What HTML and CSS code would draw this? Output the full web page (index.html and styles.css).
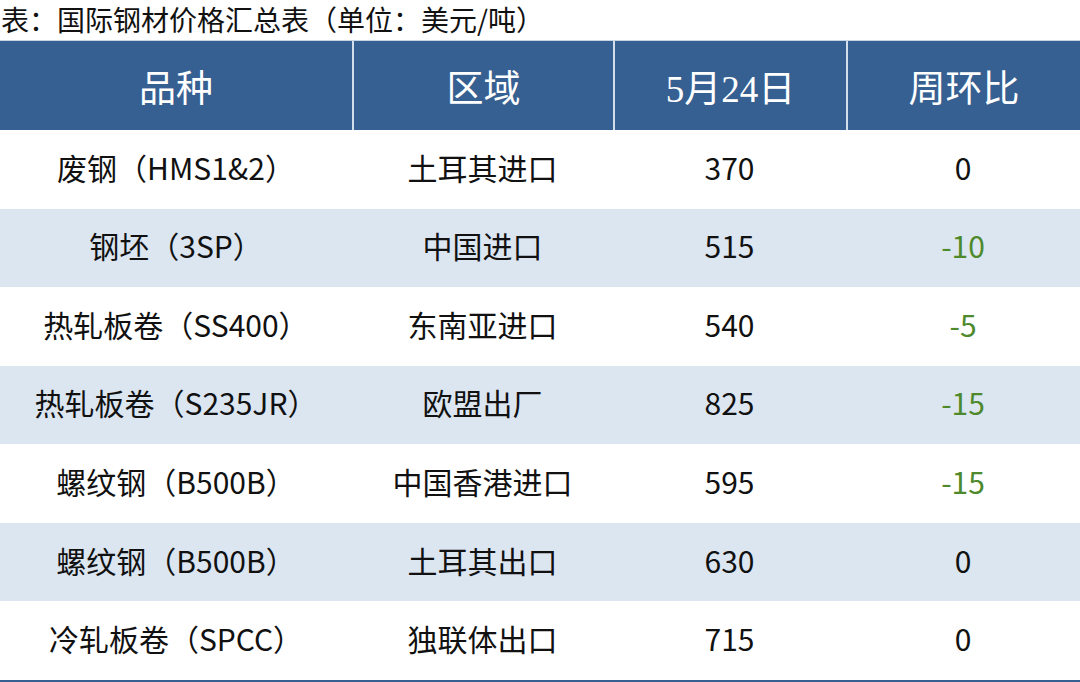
FILE: index.html
```html
<!DOCTYPE html>
<html lang="zh-CN">
<head>
<meta charset="utf-8">
<title>国际钢材价格汇总表</title>
<link rel="stylesheet" href="styles.css">
</head>
<body>
<div class="page">
  <div class="caption">表：国际钢材价格汇总表（单位：美元/吨）</div>
  <div class="price-table">
    <div class="row head">
      <div class="cell">品种</div><div class="cell">区域</div><div class="cell">5月24日</div><div class="cell">周环比</div>
    </div>
    <div class="row"><div class="cell">废钢（HMS1&amp;2）</div><div class="cell">土耳其进口</div><div class="cell">370</div><div class="cell">0</div></div>
    <div class="row alt"><div class="cell">钢坯（3SP）</div><div class="cell">中国进口</div><div class="cell">515</div><div class="cell down">-10</div></div>
    <div class="row"><div class="cell">热轧板卷（SS400）</div><div class="cell">东南亚进口</div><div class="cell">540</div><div class="cell down">-5</div></div>
    <div class="row alt"><div class="cell">热轧板卷（S235JR）</div><div class="cell">欧盟出厂</div><div class="cell">825</div><div class="cell down">-15</div></div>
    <div class="row"><div class="cell">螺纹钢（B500B）</div><div class="cell">中国香港进口</div><div class="cell">595</div><div class="cell down">-15</div></div>
    <div class="row alt"><div class="cell">螺纹钢（B500B）</div><div class="cell">土耳其出口</div><div class="cell">630</div><div class="cell">0</div></div>
    <div class="row"><div class="cell">冷轧板卷（SPCC）</div><div class="cell">独联体出口</div><div class="cell">715</div><div class="cell">0</div></div>
  </div>
</div>
</body>
</html>
```
FILE: styles.css
```css
html, body {
  margin: 0;
  padding: 0;
  background: #ffffff;
}
.page {
  width: 1080px;
  height: 682px;
  overflow: hidden;
  font-family: "Noto Sans CJK SC", "Noto Sans", sans-serif;
  color: #111111;
}
.caption {
  height: 40px;
  line-height: 38px;
  font-size: 28px;
  padding-left: 1px;
  color: #111111;
  white-space: nowrap;
}
.price-table {
  display: flex;
  flex-direction: column;
  border-bottom: 6px solid #376092;
}
.row {
  display: grid;
  grid-template-columns: 352px 261px 233px 234px;
  height: 78.57px;
}
.row.head {
  height: 90px;
  background: #376092;
  border-top: 1px solid #c8d4e4;
  box-sizing: border-box;
}
.cell {
  display: flex;
  align-items: center;
  justify-content: center;
  font-size: 30px;
  white-space: nowrap;
  padding-bottom: 5px;
}
.row.head .cell {
  color: #ffffff;
  font-family: "Liberation Serif", "Noto Sans CJK SC", serif;
  font-size: 37px;
  border-left: 2px solid #d4deea;
  padding-bottom: 0;
}
.row.head .cell:first-child {
  border-left: none;
}
.row.alt {
  background: #dce6f1;
}
.cell.down {
  color: #4e8a2c;
}
```
